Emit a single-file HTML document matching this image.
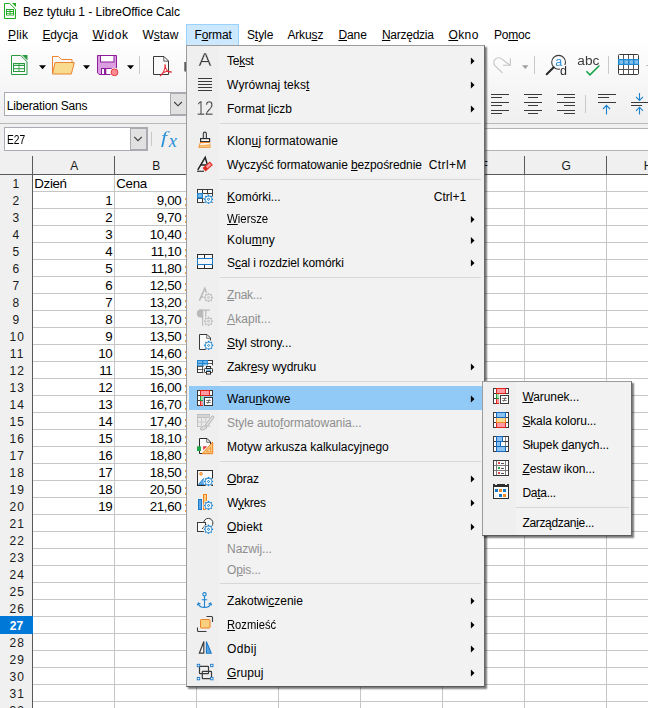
<!DOCTYPE html>
<html lang="pl"><head><meta charset="utf-8"><title>Bez tytułu 1 - LibreOffice Calc</title>
<style>
html,body{margin:0;padding:0;}
body{width:648px;height:708px;overflow:hidden;position:relative;background:#fff;font-family:"Liberation Sans",sans-serif;}
.b{position:absolute;}
.t{position:absolute;white-space:pre;font-family:"Liberation Sans",sans-serif;}
.t u{text-decoration:underline;text-decoration-thickness:1px;text-underline-offset:1px;}
svg{position:absolute;left:0;top:0;overflow:visible;}
.cell{font-size:13.33px;}
</style></head><body>

<div class="b" style="left:0px;top:24px;width:648px;height:100px;background:linear-gradient(#fff 0,#fff 14px,#f0f0f0 96px,#f0f0f0 100px);"></div>
<div class="b" style="left:0px;top:123px;width:648px;height:1px;background:#b9b9b9;"></div>
<div class="b" style="left:0px;top:124px;width:648px;height:50px;background:#f0f0f0;"></div>
<span class="t " style="left:22.90px;top:3.54px;font-size:12px;line-height:16px;color:#000;letter-spacing:-0.050px;">Bez tytułu 1 - LibreOffice Calc</span>
<div class="b" style="left:186px;top:24px;width:53px;height:22px;background:#cce8ff;border:1px solid #99d1ff;box-sizing:border-box;"></div>
<span class="t " style="left:7.90px;top:27.14px;font-size:12px;line-height:16px;color:#000;letter-spacing:0.221px;"><u>P</u>lik</span>
<span class="t " style="left:42.40px;top:27.14px;font-size:12px;line-height:16px;color:#000;letter-spacing:-0.104px;"><u>E</u>dycja</span>
<span class="t " style="left:92.40px;top:27.14px;font-size:12px;line-height:16px;color:#000;letter-spacing:0.540px;"><u>W</u>idok</span>
<span class="t " style="left:142.40px;top:27.14px;font-size:12px;line-height:16px;color:#000;letter-spacing:0.000px;">W<u>s</u>taw</span>
<span class="t " style="left:194.40px;top:27.14px;font-size:12px;line-height:16px;color:#000;letter-spacing:-0.101px;">F<u>o</u>rmat</span>
<span class="t " style="left:246.90px;top:27.14px;font-size:12px;line-height:16px;color:#000;letter-spacing:-0.044px;">S<u>t</u>yle</span>
<span class="t " style="left:287.40px;top:27.14px;font-size:12px;line-height:16px;color:#000;letter-spacing:-0.135px;">Arku<u>s</u>z</span>
<span class="t " style="left:338.40px;top:27.14px;font-size:12px;line-height:16px;color:#000;letter-spacing:-0.062px;"><u>D</u>ane</span>
<span class="t " style="left:381.90px;top:27.14px;font-size:12px;line-height:16px;color:#000;letter-spacing:-0.253px;"><u>N</u>arzędzia</span>
<span class="t " style="left:448.40px;top:27.14px;font-size:12px;line-height:16px;color:#000;letter-spacing:0.439px;"><u>O</u>kno</span>
<span class="t " style="left:493.90px;top:27.14px;font-size:12px;line-height:16px;color:#000;letter-spacing:-0.212px;">Po<u>m</u>oc</span>
<div class="b" style="left:4px;top:92px;width:190px;height:24px;background:#fff;border:1px solid #a9adb3;box-sizing:border-box;"></div>
<div class="b" style="left:170px;top:92px;width:24px;height:24px;background:#e1e1e1;border:2px solid #a9abb0;border-left-width:1px;box-sizing:border-box;"></div>
<span class="t " style="left:6.80px;top:97.54px;font-size:12px;line-height:16px;color:#000;letter-spacing:-0.185px;">Liberation Sans</span>
<div class="b" style="left:4px;top:127px;width:144px;height:24px;background:#fff;border:1px solid #a9adb3;box-sizing:border-box;"></div>
<div class="b" style="left:130px;top:127px;width:18px;height:24px;background:#e1e1e1;border:2px solid #a9abb0;border-left-width:1px;box-sizing:border-box;"></div>
<span class="t " style="left:7.10px;top:132.24px;font-size:12px;line-height:16px;color:#000;transform:scaleX(0.8524);transform-origin:0 0;">E27</span>
<div class="b" style="left:151px;top:132px;width:1px;height:14px;background:#c8c8c8;"></div>
<div class="b" style="left:186px;top:128px;width:470px;height:23px;background:#fff;border:1px solid #b4b4b4;box-sizing:border-box;"></div>
<span class="t" style="left:161.2px;top:126.06px;font-family:'Liberation Serif',serif;font-style:italic;font-size:17px;line-height:24px;color:#2a8fd6;transform:scaleX(1.3);transform-origin:0 0;">f</span>
<span class="t" style="left:168.7px;top:128.72px;font-family:'Liberation Serif',serif;font-style:italic;font-size:18.3px;line-height:24px;color:#2a8fd6;">x</span>
<div class="b" style="left:0px;top:151px;width:648px;height:23px;background:#f0f0f0;"></div>
<div class="b" style="left:0px;top:174px;width:648px;height:1px;background:#5a5a5a;"></div>
<div class="b" style="left:33px;top:175px;width:615px;height:533px;background:#fff;"></div>
<div class="b" style="left:0px;top:175px;width:32px;height:533px;background:#f0f0f0;"></div>
<div class="b" style="left:32px;top:156px;width:1px;height:552px;background:#5a5a5a;"></div>
<div class="b" style="left:114px;top:156px;width:1px;height:18px;background:#5a5a5a;"></div>
<div class="b" style="left:114px;top:175px;width:1px;height:533px;background:#c6c6c6;"></div>
<div class="b" style="left:196px;top:156px;width:1px;height:18px;background:#5a5a5a;"></div>
<div class="b" style="left:196px;top:175px;width:1px;height:533px;background:#c6c6c6;"></div>
<div class="b" style="left:278px;top:156px;width:1px;height:18px;background:#5a5a5a;"></div>
<div class="b" style="left:278px;top:175px;width:1px;height:533px;background:#c6c6c6;"></div>
<div class="b" style="left:360px;top:156px;width:1px;height:18px;background:#5a5a5a;"></div>
<div class="b" style="left:360px;top:175px;width:1px;height:533px;background:#c6c6c6;"></div>
<div class="b" style="left:442px;top:156px;width:1px;height:18px;background:#5a5a5a;"></div>
<div class="b" style="left:442px;top:175px;width:1px;height:533px;background:#c6c6c6;"></div>
<div class="b" style="left:524px;top:156px;width:1px;height:18px;background:#5a5a5a;"></div>
<div class="b" style="left:524px;top:175px;width:1px;height:533px;background:#c6c6c6;"></div>
<div class="b" style="left:606px;top:156px;width:1px;height:18px;background:#5a5a5a;"></div>
<div class="b" style="left:606px;top:175px;width:1px;height:533px;background:#c6c6c6;"></div>
<div class="b" style="left:33px;top:191px;width:615px;height:1px;background:#c6c6c6;"></div>
<div class="b" style="left:33px;top:208px;width:615px;height:1px;background:#c6c6c6;"></div>
<div class="b" style="left:33px;top:225px;width:615px;height:1px;background:#c6c6c6;"></div>
<div class="b" style="left:33px;top:242px;width:615px;height:1px;background:#c6c6c6;"></div>
<div class="b" style="left:33px;top:259px;width:615px;height:1px;background:#c6c6c6;"></div>
<div class="b" style="left:33px;top:276px;width:615px;height:1px;background:#c6c6c6;"></div>
<div class="b" style="left:33px;top:293px;width:615px;height:1px;background:#c6c6c6;"></div>
<div class="b" style="left:33px;top:310px;width:615px;height:1px;background:#c6c6c6;"></div>
<div class="b" style="left:33px;top:327px;width:615px;height:1px;background:#c6c6c6;"></div>
<div class="b" style="left:33px;top:344px;width:615px;height:1px;background:#c6c6c6;"></div>
<div class="b" style="left:33px;top:361px;width:615px;height:1px;background:#c6c6c6;"></div>
<div class="b" style="left:33px;top:378px;width:615px;height:1px;background:#c6c6c6;"></div>
<div class="b" style="left:33px;top:395px;width:615px;height:1px;background:#c6c6c6;"></div>
<div class="b" style="left:33px;top:412px;width:615px;height:1px;background:#c6c6c6;"></div>
<div class="b" style="left:33px;top:429px;width:615px;height:1px;background:#c6c6c6;"></div>
<div class="b" style="left:33px;top:446px;width:615px;height:1px;background:#c6c6c6;"></div>
<div class="b" style="left:33px;top:463px;width:615px;height:1px;background:#c6c6c6;"></div>
<div class="b" style="left:33px;top:480px;width:615px;height:1px;background:#c6c6c6;"></div>
<div class="b" style="left:33px;top:497px;width:615px;height:1px;background:#c6c6c6;"></div>
<div class="b" style="left:33px;top:514px;width:615px;height:1px;background:#c6c6c6;"></div>
<div class="b" style="left:33px;top:531px;width:615px;height:1px;background:#c6c6c6;"></div>
<div class="b" style="left:33px;top:548px;width:615px;height:1px;background:#c6c6c6;"></div>
<div class="b" style="left:33px;top:565px;width:615px;height:1px;background:#c6c6c6;"></div>
<div class="b" style="left:33px;top:582px;width:615px;height:1px;background:#c6c6c6;"></div>
<div class="b" style="left:33px;top:599px;width:615px;height:1px;background:#c6c6c6;"></div>
<div class="b" style="left:33px;top:616px;width:615px;height:1px;background:#c6c6c6;"></div>
<div class="b" style="left:33px;top:633px;width:615px;height:1px;background:#c6c6c6;"></div>
<div class="b" style="left:33px;top:650px;width:615px;height:1px;background:#c6c6c6;"></div>
<div class="b" style="left:33px;top:667px;width:615px;height:1px;background:#c6c6c6;"></div>
<div class="b" style="left:33px;top:684px;width:615px;height:1px;background:#c6c6c6;"></div>
<div class="b" style="left:33px;top:701px;width:615px;height:1px;background:#c6c6c6;"></div>
<div class="b" style="left:0px;top:616px;width:33px;height:18px;background:#0078d7;"></div>
<span class="t " style="left:70.20px;top:158.14px;font-size:12px;line-height:16px;color:#1a1a1a;">A</span>
<span class="t " style="left:152.20px;top:158.14px;font-size:12px;line-height:16px;color:#1a1a1a;">B</span>
<span class="t " style="left:233.87px;top:158.14px;font-size:12px;line-height:16px;color:#1a1a1a;">C</span>
<span class="t " style="left:315.87px;top:158.14px;font-size:12px;line-height:16px;color:#1a1a1a;">D</span>
<span class="t " style="left:398.20px;top:158.14px;font-size:12px;line-height:16px;color:#1a1a1a;">E</span>
<span class="t " style="left:480.53px;top:158.14px;font-size:12px;line-height:16px;color:#1a1a1a;">F</span>
<span class="t " style="left:561.53px;top:158.14px;font-size:12px;line-height:16px;color:#1a1a1a;">G</span>
<span class="t " style="left:643.87px;top:158.14px;font-size:12px;line-height:16px;color:#1a1a1a;">H</span>
<span class="t " style="left:12.56px;top:176.04px;font-size:12px;line-height:16px;color:#1a1a1a;letter-spacing:1.500px;">1</span>
<span class="t " style="left:12.56px;top:193.04px;font-size:12px;line-height:16px;color:#1a1a1a;letter-spacing:1.500px;">2</span>
<span class="t " style="left:12.56px;top:210.04px;font-size:12px;line-height:16px;color:#1a1a1a;letter-spacing:1.500px;">3</span>
<span class="t " style="left:12.56px;top:227.04px;font-size:12px;line-height:16px;color:#1a1a1a;letter-spacing:1.500px;">4</span>
<span class="t " style="left:12.56px;top:244.04px;font-size:12px;line-height:16px;color:#1a1a1a;letter-spacing:1.500px;">5</span>
<span class="t " style="left:12.56px;top:261.04px;font-size:12px;line-height:16px;color:#1a1a1a;letter-spacing:1.500px;">6</span>
<span class="t " style="left:12.56px;top:278.04px;font-size:12px;line-height:16px;color:#1a1a1a;letter-spacing:1.500px;">7</span>
<span class="t " style="left:12.56px;top:295.04px;font-size:12px;line-height:16px;color:#1a1a1a;letter-spacing:1.500px;">8</span>
<span class="t " style="left:12.56px;top:312.04px;font-size:12px;line-height:16px;color:#1a1a1a;letter-spacing:1.500px;">9</span>
<span class="t " style="left:9.38px;top:329.04px;font-size:12px;line-height:16px;color:#1a1a1a;letter-spacing:1.200px;">10</span>
<span class="t " style="left:9.82px;top:346.04px;font-size:12px;line-height:16px;color:#1a1a1a;letter-spacing:1.200px;">11</span>
<span class="t " style="left:9.38px;top:363.04px;font-size:12px;line-height:16px;color:#1a1a1a;letter-spacing:1.200px;">12</span>
<span class="t " style="left:9.38px;top:380.04px;font-size:12px;line-height:16px;color:#1a1a1a;letter-spacing:1.200px;">13</span>
<span class="t " style="left:9.38px;top:397.04px;font-size:12px;line-height:16px;color:#1a1a1a;letter-spacing:1.200px;">14</span>
<span class="t " style="left:9.38px;top:414.04px;font-size:12px;line-height:16px;color:#1a1a1a;letter-spacing:1.200px;">15</span>
<span class="t " style="left:9.38px;top:431.04px;font-size:12px;line-height:16px;color:#1a1a1a;letter-spacing:1.200px;">16</span>
<span class="t " style="left:9.38px;top:448.04px;font-size:12px;line-height:16px;color:#1a1a1a;letter-spacing:1.200px;">17</span>
<span class="t " style="left:9.38px;top:465.04px;font-size:12px;line-height:16px;color:#1a1a1a;letter-spacing:1.200px;">18</span>
<span class="t " style="left:9.38px;top:482.04px;font-size:12px;line-height:16px;color:#1a1a1a;letter-spacing:1.200px;">19</span>
<span class="t " style="left:9.38px;top:499.04px;font-size:12px;line-height:16px;color:#1a1a1a;letter-spacing:1.200px;">20</span>
<span class="t " style="left:9.38px;top:516.04px;font-size:12px;line-height:16px;color:#1a1a1a;letter-spacing:1.200px;">21</span>
<span class="t " style="left:9.38px;top:533.04px;font-size:12px;line-height:16px;color:#1a1a1a;letter-spacing:1.200px;">22</span>
<span class="t " style="left:9.38px;top:550.04px;font-size:12px;line-height:16px;color:#1a1a1a;letter-spacing:1.200px;">23</span>
<span class="t " style="left:9.38px;top:567.04px;font-size:12px;line-height:16px;color:#1a1a1a;letter-spacing:1.200px;">24</span>
<span class="t " style="left:9.38px;top:584.04px;font-size:12px;line-height:16px;color:#1a1a1a;letter-spacing:1.200px;">25</span>
<span class="t " style="left:9.38px;top:601.04px;font-size:12px;line-height:16px;color:#1a1a1a;letter-spacing:1.200px;">26</span>
<span class="t " style="left:9.83px;top:618.04px;font-size:12px;line-height:16px;color:#fff;font-weight:bold;">27</span>
<span class="t " style="left:9.38px;top:635.04px;font-size:12px;line-height:16px;color:#1a1a1a;letter-spacing:1.200px;">28</span>
<span class="t " style="left:9.38px;top:652.04px;font-size:12px;line-height:16px;color:#1a1a1a;letter-spacing:1.200px;">29</span>
<span class="t " style="left:9.38px;top:669.04px;font-size:12px;line-height:16px;color:#1a1a1a;letter-spacing:1.200px;">30</span>
<span class="t " style="left:9.38px;top:686.04px;font-size:12px;line-height:16px;color:#1a1a1a;letter-spacing:1.200px;">31</span>
<span class="t " style="left:9.38px;top:703.04px;font-size:12px;line-height:16px;color:#1a1a1a;letter-spacing:1.200px;">32</span>
<span class="t" style="left:34.30px;top:174.88px;font-size:13.33px;line-height:17px;letter-spacing:-0.35px;color:#000;">Dzień</span>
<span class="t" style="left:116.30px;top:174.88px;font-size:13.33px;line-height:17px;letter-spacing:-0.35px;color:#000;">Cena</span>
<span class="t" style="left:105.25px;top:191.88px;font-size:13.33px;line-height:17px;letter-spacing:-0.35px;color:#000;">1</span>
<span class="t" style="left:156.79px;top:191.88px;font-size:13.33px;line-height:17px;letter-spacing:-0.35px;color:#000;">9,00</span>
<div class="b" style="left:185px;top:198px;width:1px;height:2px;background:#f0a040;"></div>
<div class="b" style="left:185px;top:204px;width:1px;height:2px;background:#f0a040;"></div>
<span class="t" style="left:105.25px;top:208.88px;font-size:13.33px;line-height:17px;letter-spacing:-0.35px;color:#000;">2</span>
<span class="t" style="left:156.79px;top:208.88px;font-size:13.33px;line-height:17px;letter-spacing:-0.35px;color:#000;">9,70</span>
<div class="b" style="left:185px;top:215px;width:1px;height:2px;background:#f0a040;"></div>
<div class="b" style="left:185px;top:221px;width:1px;height:2px;background:#f0a040;"></div>
<span class="t" style="left:105.25px;top:225.88px;font-size:13.33px;line-height:17px;letter-spacing:-0.35px;color:#000;">3</span>
<span class="t" style="left:149.74px;top:225.88px;font-size:13.33px;line-height:17px;letter-spacing:-0.35px;color:#000;">10,40</span>
<div class="b" style="left:185px;top:232px;width:1px;height:2px;background:#f0a040;"></div>
<div class="b" style="left:185px;top:238px;width:1px;height:2px;background:#f0a040;"></div>
<span class="t" style="left:105.25px;top:242.88px;font-size:13.33px;line-height:17px;letter-spacing:-0.35px;color:#000;">4</span>
<span class="t" style="left:150.73px;top:242.88px;font-size:13.33px;line-height:17px;letter-spacing:-0.35px;color:#000;">11,10</span>
<div class="b" style="left:185px;top:249px;width:1px;height:2px;background:#f0a040;"></div>
<div class="b" style="left:185px;top:255px;width:1px;height:2px;background:#f0a040;"></div>
<span class="t" style="left:105.25px;top:259.88px;font-size:13.33px;line-height:17px;letter-spacing:-0.35px;color:#000;">5</span>
<span class="t" style="left:150.73px;top:259.88px;font-size:13.33px;line-height:17px;letter-spacing:-0.35px;color:#000;">11,80</span>
<div class="b" style="left:185px;top:266px;width:1px;height:2px;background:#f0a040;"></div>
<div class="b" style="left:185px;top:272px;width:1px;height:2px;background:#f0a040;"></div>
<span class="t" style="left:105.25px;top:276.88px;font-size:13.33px;line-height:17px;letter-spacing:-0.35px;color:#000;">6</span>
<span class="t" style="left:149.74px;top:276.88px;font-size:13.33px;line-height:17px;letter-spacing:-0.35px;color:#000;">12,50</span>
<div class="b" style="left:185px;top:283px;width:1px;height:2px;background:#f0a040;"></div>
<div class="b" style="left:185px;top:289px;width:1px;height:2px;background:#f0a040;"></div>
<span class="t" style="left:105.25px;top:293.88px;font-size:13.33px;line-height:17px;letter-spacing:-0.35px;color:#000;">7</span>
<span class="t" style="left:149.74px;top:293.88px;font-size:13.33px;line-height:17px;letter-spacing:-0.35px;color:#000;">13,20</span>
<div class="b" style="left:185px;top:300px;width:1px;height:2px;background:#f0a040;"></div>
<div class="b" style="left:185px;top:306px;width:1px;height:2px;background:#f0a040;"></div>
<span class="t" style="left:105.25px;top:310.88px;font-size:13.33px;line-height:17px;letter-spacing:-0.35px;color:#000;">8</span>
<span class="t" style="left:149.74px;top:310.88px;font-size:13.33px;line-height:17px;letter-spacing:-0.35px;color:#000;">13,70</span>
<div class="b" style="left:185px;top:317px;width:1px;height:2px;background:#f0a040;"></div>
<div class="b" style="left:185px;top:323px;width:1px;height:2px;background:#f0a040;"></div>
<span class="t" style="left:105.25px;top:327.88px;font-size:13.33px;line-height:17px;letter-spacing:-0.35px;color:#000;">9</span>
<span class="t" style="left:149.74px;top:327.88px;font-size:13.33px;line-height:17px;letter-spacing:-0.35px;color:#000;">13,50</span>
<div class="b" style="left:185px;top:334px;width:1px;height:2px;background:#f0a040;"></div>
<div class="b" style="left:185px;top:340px;width:1px;height:2px;background:#f0a040;"></div>
<span class="t" style="left:98.19px;top:344.88px;font-size:13.33px;line-height:17px;letter-spacing:-0.35px;color:#000;">10</span>
<span class="t" style="left:149.74px;top:344.88px;font-size:13.33px;line-height:17px;letter-spacing:-0.35px;color:#000;">14,60</span>
<div class="b" style="left:185px;top:351px;width:1px;height:2px;background:#f0a040;"></div>
<div class="b" style="left:185px;top:357px;width:1px;height:2px;background:#f0a040;"></div>
<span class="t" style="left:99.18px;top:361.88px;font-size:13.33px;line-height:17px;letter-spacing:-0.35px;color:#000;">11</span>
<span class="t" style="left:149.74px;top:361.88px;font-size:13.33px;line-height:17px;letter-spacing:-0.35px;color:#000;">15,30</span>
<div class="b" style="left:185px;top:368px;width:1px;height:2px;background:#f0a040;"></div>
<div class="b" style="left:185px;top:374px;width:1px;height:2px;background:#f0a040;"></div>
<span class="t" style="left:98.19px;top:378.88px;font-size:13.33px;line-height:17px;letter-spacing:-0.35px;color:#000;">12</span>
<span class="t" style="left:149.74px;top:378.88px;font-size:13.33px;line-height:17px;letter-spacing:-0.35px;color:#000;">16,00</span>
<div class="b" style="left:185px;top:385px;width:1px;height:2px;background:#f0a040;"></div>
<div class="b" style="left:185px;top:391px;width:1px;height:2px;background:#f0a040;"></div>
<span class="t" style="left:98.19px;top:395.88px;font-size:13.33px;line-height:17px;letter-spacing:-0.35px;color:#000;">13</span>
<span class="t" style="left:149.74px;top:395.88px;font-size:13.33px;line-height:17px;letter-spacing:-0.35px;color:#000;">16,70</span>
<div class="b" style="left:185px;top:402px;width:1px;height:2px;background:#f0a040;"></div>
<div class="b" style="left:185px;top:408px;width:1px;height:2px;background:#f0a040;"></div>
<span class="t" style="left:98.19px;top:412.88px;font-size:13.33px;line-height:17px;letter-spacing:-0.35px;color:#000;">14</span>
<span class="t" style="left:149.74px;top:412.88px;font-size:13.33px;line-height:17px;letter-spacing:-0.35px;color:#000;">17,40</span>
<div class="b" style="left:185px;top:419px;width:1px;height:2px;background:#f0a040;"></div>
<div class="b" style="left:185px;top:425px;width:1px;height:2px;background:#f0a040;"></div>
<span class="t" style="left:98.19px;top:429.88px;font-size:13.33px;line-height:17px;letter-spacing:-0.35px;color:#000;">15</span>
<span class="t" style="left:149.74px;top:429.88px;font-size:13.33px;line-height:17px;letter-spacing:-0.35px;color:#000;">18,10</span>
<div class="b" style="left:185px;top:436px;width:1px;height:2px;background:#f0a040;"></div>
<div class="b" style="left:185px;top:442px;width:1px;height:2px;background:#f0a040;"></div>
<span class="t" style="left:98.19px;top:446.88px;font-size:13.33px;line-height:17px;letter-spacing:-0.35px;color:#000;">16</span>
<span class="t" style="left:149.74px;top:446.88px;font-size:13.33px;line-height:17px;letter-spacing:-0.35px;color:#000;">18,80</span>
<div class="b" style="left:185px;top:453px;width:1px;height:2px;background:#f0a040;"></div>
<div class="b" style="left:185px;top:459px;width:1px;height:2px;background:#f0a040;"></div>
<span class="t" style="left:98.19px;top:463.88px;font-size:13.33px;line-height:17px;letter-spacing:-0.35px;color:#000;">17</span>
<span class="t" style="left:149.74px;top:463.88px;font-size:13.33px;line-height:17px;letter-spacing:-0.35px;color:#000;">18,50</span>
<div class="b" style="left:185px;top:470px;width:1px;height:2px;background:#f0a040;"></div>
<div class="b" style="left:185px;top:476px;width:1px;height:2px;background:#f0a040;"></div>
<span class="t" style="left:98.19px;top:480.88px;font-size:13.33px;line-height:17px;letter-spacing:-0.35px;color:#000;">18</span>
<span class="t" style="left:149.74px;top:480.88px;font-size:13.33px;line-height:17px;letter-spacing:-0.35px;color:#000;">20,50</span>
<div class="b" style="left:185px;top:487px;width:1px;height:2px;background:#f0a040;"></div>
<div class="b" style="left:185px;top:493px;width:1px;height:2px;background:#f0a040;"></div>
<span class="t" style="left:98.19px;top:497.88px;font-size:13.33px;line-height:17px;letter-spacing:-0.35px;color:#000;">19</span>
<span class="t" style="left:149.74px;top:497.88px;font-size:13.33px;line-height:17px;letter-spacing:-0.35px;color:#000;">21,60</span>
<div class="b" style="left:185px;top:504px;width:1px;height:2px;background:#f0a040;"></div>
<div class="b" style="left:185px;top:510px;width:1px;height:2px;background:#f0a040;"></div>
<svg width="648" height="708" viewBox="0 0 648 708"><defs><filter id="idf" x="-10%" y="-10%" width="120%" height="120%"><feOffset dx="0" dy="0"/></filter></defs>
<!-- title icon -->
<g>
<path d="M4.500 3.500h5.200l5.800 5.800v9.200h-11z" fill="#fff" stroke="#22aa22" stroke-width="1"/>
<path d="M12 3h4v4z" fill="#22aa22"/>
<rect x="6" y="9" width="8" height="6.500" fill="#22aa22"/>
<g fill="#fff"><rect x="7" y="10" width="2.600" height="1"/><rect x="10.400" y="10" width="2.600" height="1"/><rect x="7" y="12" width="2.600" height="1"/><rect x="10.400" y="12" width="2.600" height="1"/><rect x="7" y="13.700" width="2.600" height="1"/><rect x="10.400" y="13.700" width="2.600" height="1"/></g>
</g>
<!-- new spreadsheet -->
<g>
<path d="M11.5 55.5h9.3l6.2 6.2v12.8h-15.5z" fill="#fafafa" stroke="#2a9a42" stroke-width="1"/>
<path d="M22 55h5.5v5.5z" fill="#2a9a42"/>
<rect x="13" y="63" width="12" height="9" fill="#2a9a42"/>
<rect x="14" y="64" width="4.6" height="1" fill="#c8ecc8"/><rect x="19.4" y="64" width="4.6" height="1" fill="#c8ecc8"/>
<rect x="14" y="66" width="4.6" height="2.2" fill="#fff"/><rect x="19.4" y="66" width="4.6" height="2.2" fill="#fff"/>
<rect x="14" y="69.2" width="4.6" height="1.8" fill="#fff"/><rect x="19.4" y="69.2" width="4.6" height="1.8" fill="#fff"/>
</g>
<path d="M39 65.3h7l-3.5 4z" fill="#000"/>
<!-- open folder -->
<g>
<path d="M52.5 74v-17.5h6l3 3h10.5v3.5" fill="#fafafa" stroke="#ee8432" stroke-width="1"/>
<path d="M55 62.5h19.3l-3 11.5h-18.8z" fill="#f8db8f" stroke="#ee8432" stroke-width="1" stroke-linejoin="round"/>
</g>
<path d="M83 65.3h7l-3.5 4z" fill="#000"/>
<!-- save -->
<g>
<path d="M97.5 55.5h19v19h-17.3l-1.7 -1.7z" fill="#dc9ee0" stroke="#8e1f9a" stroke-width="1"/>
<rect x="100.5" y="55.5" width="13.5" height="6.5" fill="#fff" stroke="#8e1f9a"/>
<rect x="101.5" y="68.5" width="12" height="6" fill="#fff" stroke="#8e1f9a"/>
<rect x="104" y="69" width="2.3" height="5" fill="#8e1f9a"/>
<circle cx="114.5" cy="72.3" r="4.6" fill="#fafafa"/>
<circle cx="114.5" cy="72.3" r="3.4" fill="#ff8a96" stroke="#e23a3a" stroke-width="1"/>
</g>
<path d="M127 65.3h7l-3.5 4z" fill="#000"/>
<rect x="139" y="56" width="1" height="18" fill="#c9c9c9"/>
<!-- pdf -->
<g>
<path d="M153.500 56.500h10.5l4.5 4.500v13.500h-15z" fill="#fafafa" stroke="#3a3a3a"/>
<path d="M163.800 56.800v4.400h4.400" fill="none" stroke="#3a3a3a" stroke-width="0.800"/>
<path d="M165 64.200c0.300 3 -0.300 5.300 -1.300 7.300c-1 2 -2.500 3.700 -3.700 4.500M165 64.200c0.200 3 0.800 5 2 6.300c1.300 1.300 3 1.700 4.800 1.700M160 76c1.500 -2.500 4 -4 6 -4.500c2 -0.500 4.200 -0.200 5.800 0.700" fill="none" stroke="#e8303a" stroke-width="1.100"/>
</g>
<!-- print (cut) -->
<rect x="184.3" y="62" width="3" height="9.500" fill="#5a5a5a"/>
<!-- redo disabled -->
<g fill="none" stroke="#c4c4c4" stroke-width="1.100">
<path d="M502.500 73.200l-7.300 -7.300a4.800 4.800 0 0 1 6.800 -6.800l8 6.200"/>
<path d="M510.400 58.300v7h-7.400"/>
</g>
<path d="M522 65.300h6.500l-3.250 3.700z" fill="#a0a0a0"/>
<rect x="534" y="56" width="1" height="18" fill="#c9c9c9"/>
<!-- find & replace -->
<g>
<circle cx="558.600" cy="62.300" r="6.900" fill="#fcfcfc" stroke="#3a3a3a" stroke-width="1.100"/>
<path d="M553.700 67.300l-7 7" stroke="#2a2a2a" stroke-width="2" stroke-linecap="round"/>
<rect x="560" y="65" width="8" height="10" fill="#f6f6f6"/>
<text filter="url(#idf)" x="555.200" y="65.900" font-family="Liberation Sans, sans-serif" font-size="12.500" fill="#2a8fd6">a</text>
<text filter="url(#idf)" x="560" y="74.500" font-family="Liberation Sans, sans-serif" font-size="12.500" fill="#2a2a2a">d</text>
</g>
<!-- spell -->
<g>
<text filter="url(#idf)" x="577.300" y="64.700" font-family="Liberation Sans, sans-serif" font-size="12" fill="#3a3a3a" textLength="22" lengthAdjust="spacingAndGlyphs">abc</text>
<path d="M586.400 71.300l3.600 3.600l9.400 -9.400" fill="none" stroke="#18a34a" stroke-width="1.600"/>
</g>
<rect x="608" y="56" width="1" height="18" fill="#c9c9c9"/>
<!-- grid icon -->
<g>
<rect x="618.500" y="54.500" width="20" height="20" rx="1" fill="#fff" stroke="#3a3a3a"/>
<path d="M623.500 55v19.500M628.500 55v19.500M633.500 55v19.500M619 59.500h19.500M619 64.500h19.500M619 69.500h19.500" stroke="#555" fill="none"/>
<rect x="618" y="59" width="21" height="6" fill="#1e88d2"/>
<rect x="619.500" y="60.300" width="3.500" height="3.500" fill="#86c0ea"/><rect x="624.500" y="60.300" width="3.500" height="3.500" fill="#86c0ea"/><rect x="629.500" y="60.300" width="3.500" height="3.500" fill="#86c0ea"/><rect x="634.500" y="60.300" width="3.500" height="3.500" fill="#86c0ea"/>
</g>
<rect x="646.500" y="65" width="2" height="1" fill="#b0b0b0"/>
<!-- align left/center/right -->
<g fill="#3a3a3a">
<rect x="491" y="94" width="18" height="1"/><rect x="491" y="97" width="11" height="1"/><rect x="491" y="102" width="18" height="1"/><rect x="491" y="105" width="11" height="1"/><rect x="491" y="110" width="18" height="1"/><rect x="491" y="113" width="11" height="1"/>
<rect x="524" y="94" width="18" height="1"/><rect x="528" y="97" width="10" height="1"/><rect x="524" y="102" width="18" height="1"/><rect x="528" y="105" width="10" height="1"/><rect x="524" y="110" width="18" height="1"/><rect x="528" y="113" width="10" height="1"/>
<rect x="557" y="94" width="18" height="1"/><rect x="564" y="97" width="11" height="1"/><rect x="557" y="102" width="18" height="1"/><rect x="564" y="105" width="11" height="1"/><rect x="557" y="110" width="18" height="1"/><rect x="564" y="113" width="11" height="1"/>
</g>
<rect x="585" y="95" width="1" height="18" fill="#c9c9c9"/>
<!-- align top -->
<g fill="#3a3a3a"><rect x="598" y="94" width="18" height="1"/><rect x="598" y="97" width="11" height="1"/><rect x="598" y="102" width="18" height="1"/></g>
<path d="M606.500 114.500v-9M603 109l3.500 -3.600l3.500 3.600" fill="none" stroke="#1c84d0" stroke-width="1.100"/>
<!-- align middle -->
<g fill="#3a3a3a"><rect x="631" y="102" width="18" height="1"/><rect x="631" y="105" width="11" height="1"/></g>
<path d="M639.500 93v7M636 96.800l3.500 3.600l3.500 -3.600M639.500 114.500v-7M636 110.800l3.500 -3.600l3.500 3.600" fill="none" stroke="#1c84d0" stroke-width="1.100"/>
<!-- chevrons -->
<path d="M174.200 102l3.800 3.800l3.800 -3.800" fill="none" stroke="#3a3a3a" stroke-width="1.100"/>
<path d="M134.200 136.900l3.800 3.800l3.800 -3.800" fill="none" stroke="#3a3a3a" stroke-width="1.100"/>
</svg>
<div class="b" style="left:186px;top:45px;width:299px;height:642px;background:#f2f2f2;border:1px solid;border-color:#9c9c9c #6a6a6a #5a5a5a #9c9c9c;box-sizing:border-box;box-shadow:2px 2px 1.5px rgba(0,0,0,0.5);"></div>
<div class="b" style="left:187px;top:46px;width:32px;height:640px;background:#efefef;"></div>
<div class="b" style="left:189px;top:386px;width:293px;height:24px;background:#91c9f7;"></div>
<span class="t " style="left:227.10px;top:52.84px;font-size:12px;line-height:16px;color:#000;letter-spacing:-0.302px;">Te<u>k</u>st</span>
<span class="t " style="left:227.10px;top:76.84px;font-size:12px;line-height:16px;color:#000;letter-spacing:0.073px;">Wyrównaj teks<u>t</u></span>
<span class="t " style="left:227.10px;top:100.84px;font-size:12px;line-height:16px;color:#000;letter-spacing:-0.049px;">Format <u>l</u>iczb</span>
<div class="b" style="left:220px;top:123px;width:261px;height:1px;background:#d7d7d7;"></div>
<span class="t " style="left:227.10px;top:132.84px;font-size:12px;line-height:16px;color:#000;letter-spacing:0.115px;">Klon<u>u</u>j formatowanie</span>
<span class="t " style="left:227.10px;top:156.84px;font-size:12px;line-height:16px;color:#000;letter-spacing:-0.099px;">Wyczyść formatowanie <u>b</u>ezpośrednie</span>
<span class="t " style="left:428.80px;top:156.84px;font-size:12px;line-height:16px;color:#000;letter-spacing:0.367px;">Ctrl+M</span>
<div class="b" style="left:220px;top:179px;width:261px;height:1px;background:#d7d7d7;"></div>
<span class="t " style="left:227.10px;top:188.84px;font-size:12px;line-height:16px;color:#000;letter-spacing:-0.046px;"><u>K</u>omórki...</span>
<span class="t " style="left:433.70px;top:188.84px;font-size:12px;line-height:16px;color:#000;letter-spacing:0.051px;">Ctrl+1</span>
<span class="t " style="left:227.10px;top:211.34px;font-size:12px;line-height:16px;color:#000;transform:scaleX(0.9507);transform-origin:0 0;"><u>W</u>iersze</span>
<span class="t " style="left:227.10px;top:232.34px;font-size:12px;line-height:16px;color:#000;letter-spacing:0.152px;">Kolu<u>m</u>ny</span>
<span class="t " style="left:227.10px;top:254.84px;font-size:12px;line-height:16px;color:#000;letter-spacing:-0.117px;">S<u>c</u>al i rozdziel komórki</span>
<div class="b" style="left:220px;top:277px;width:261px;height:1px;background:#d7d7d7;"></div>
<span class="t " style="left:227.10px;top:286.84px;font-size:12px;line-height:16px;color:#8e8e8e;letter-spacing:-0.230px;"><u>Z</u>nak...</span>
<span class="t " style="left:227.10px;top:310.84px;font-size:12px;line-height:16px;color:#8e8e8e;letter-spacing:0.043px;"><u>A</u>kapit...</span>
<span class="t " style="left:227.10px;top:334.84px;font-size:12px;line-height:16px;color:#000;letter-spacing:-0.056px;"><u>S</u>tyl strony...</span>
<span class="t " style="left:227.10px;top:358.84px;font-size:12px;line-height:16px;color:#000;letter-spacing:-0.114px;">Zakr<u>e</u>sy wydruku</span>
<div class="b" style="left:220px;top:381px;width:261px;height:1px;background:#d7d7d7;"></div>
<span class="t " style="left:227.10px;top:390.84px;font-size:12px;line-height:16px;color:#000;letter-spacing:0.061px;">Waru<u>n</u>kowe</span>
<span class="t " style="left:227.10px;top:414.84px;font-size:12px;line-height:16px;color:#8e8e8e;letter-spacing:-0.038px;">Style auto<u>f</u>ormatowania...</span>
<span class="t " style="left:227.10px;top:438.84px;font-size:12px;line-height:16px;color:#000;letter-spacing:-0.014px;">Motyw arkusza kalkulacyjnego</span>
<div class="b" style="left:220px;top:461px;width:261px;height:1px;background:#d7d7d7;"></div>
<span class="t " style="left:227.10px;top:470.84px;font-size:12px;line-height:16px;color:#000;letter-spacing:-0.219px;"><u>O</u>braz</span>
<span class="t " style="left:227.10px;top:494.84px;font-size:12px;line-height:16px;color:#000;letter-spacing:-0.218px;">W<u>y</u>kres</span>
<span class="t " style="left:227.10px;top:518.84px;font-size:12px;line-height:16px;color:#000;letter-spacing:0.124px;"><u>O</u>biekt</span>
<span class="t " style="left:227.10px;top:541.34px;font-size:12px;line-height:16px;color:#8e8e8e;letter-spacing:-0.080px;">Nazwi<u>j</u>...</span>
<span class="t " style="left:227.10px;top:562.34px;font-size:12px;line-height:16px;color:#8e8e8e;letter-spacing:-0.146px;">O<u>p</u>is...</span>
<div class="b" style="left:220px;top:583px;width:261px;height:1px;background:#d7d7d7;"></div>
<span class="t " style="left:227.10px;top:592.84px;font-size:12px;line-height:16px;color:#000;letter-spacing:-0.019px;">Zakotwi<u>c</u>zenie</span>
<span class="t " style="left:227.10px;top:616.84px;font-size:12px;line-height:16px;color:#000;transform:scaleX(0.9321);transform-origin:0 0;"><u>R</u>ozmieść</span>
<span class="t " style="left:227.10px;top:640.84px;font-size:12px;line-height:16px;color:#000;letter-spacing:0.347px;">Odbi<u>j</u></span>
<span class="t " style="left:227.10px;top:664.84px;font-size:12px;line-height:16px;color:#000;letter-spacing:0.056px;"><u>G</u>rupuj</span>
<div class="b" style="left:482px;top:381px;width:150px;height:155px;background:#f2f2f2;border:1px solid;border-color:#9c9c9c #6a6a6a #5a5a5a #9c9c9c;box-sizing:border-box;box-shadow:2px 2px 1.5px rgba(0,0,0,0.5);"></div>
<div class="b" style="left:483px;top:382px;width:33px;height:153px;background:#efefef;"></div>
<span class="t " style="left:522.40px;top:388.84px;font-size:12px;line-height:16px;color:#000;letter-spacing:-0.064px;"><u>W</u>arunek...</span>
<span class="t " style="left:522.40px;top:412.84px;font-size:12px;line-height:16px;color:#000;letter-spacing:-0.146px;"><u>S</u>kala koloru...</span>
<span class="t " style="left:522.40px;top:436.84px;font-size:12px;line-height:16px;color:#000;letter-spacing:-0.135px;">Słupek <u>d</u>anych...</span>
<span class="t " style="left:522.40px;top:460.84px;font-size:12px;line-height:16px;color:#000;letter-spacing:-0.102px;"><u>Z</u>estaw ikon...</span>
<span class="t " style="left:522.40px;top:484.84px;font-size:12px;line-height:16px;color:#000;letter-spacing:-0.275px;">Da<u>t</u>a...</span>
<div class="b" style="left:516px;top:507px;width:113px;height:1px;background:#d7d7d7;"></div>
<span class="t " style="left:522.40px;top:514.54px;font-size:12px;line-height:16px;color:#000;letter-spacing:-0.318px;">Zarządzan<u>i</u>e...</span>
<svg width="648" height="708" viewBox="0 0 648 708"><path d="M470.9 57.6l3.600 3.500l-3.600 3.500z" fill="#000"/><path d="M470.9 81.6l3.600 3.500l-3.600 3.500z" fill="#000"/><path d="M470.9 105.6l3.600 3.500l-3.600 3.500z" fill="#000"/><path d="M470.9 216.1l3.600 3.500l-3.600 3.500z" fill="#000"/><path d="M470.9 237.1l3.600 3.500l-3.600 3.500z" fill="#000"/><path d="M470.9 259.6l3.600 3.500l-3.600 3.500z" fill="#000"/><path d="M470.9 363.6l3.600 3.500l-3.600 3.500z" fill="#000"/><path d="M470.9 395.6l3.600 3.500l-3.600 3.500z" fill="#000"/><path d="M470.9 475.6l3.600 3.500l-3.600 3.500z" fill="#000"/><path d="M470.9 499.6l3.600 3.500l-3.600 3.500z" fill="#000"/><path d="M470.9 523.6l3.600 3.500l-3.600 3.500z" fill="#000"/><path d="M470.9 597.6l3.600 3.500l-3.600 3.500z" fill="#000"/><path d="M470.9 621.6l3.600 3.500l-3.600 3.500z" fill="#000"/><path d="M470.9 645.6l3.600 3.500l-3.600 3.500z" fill="#000"/><path d="M470.9 669.6l3.600 3.500l-3.600 3.500z" fill="#000"/><text filter="url(#idf)" x="198.6" y="66.3" font-family="Liberation Sans, sans-serif" font-size="18.5" fill="#3a3a3a" stroke="#f1f1f1" stroke-width="0.3" textLength="13" lengthAdjust="spacingAndGlyphs">A</text>
<rect x="198" y="78" width="14" height="1" fill="#3a3a3a"/>
<rect x="198" y="81" width="14" height="1" fill="#3a3a3a"/>
<rect x="198" y="84" width="14" height="1" fill="#3a3a3a"/>
<rect x="198" y="87" width="14" height="1" fill="#3a3a3a"/>
<rect x="198" y="90" width="14" height="1" fill="#3a3a3a"/>
<text filter="url(#idf)" x="196.4" y="115" font-family="Liberation Sans, sans-serif" font-size="20" fill="#3a3a3a" stroke="#f1f1f1" stroke-width="0.3" textLength="17" lengthAdjust="spacingAndGlyphs">12</text>
<path d="M203.300 138.400v-4.700a1.550 1.550 0 0 1 3.100 0v4.700" fill="#e4e4e4" stroke="#3a3a3a" stroke-width="1.100"/>
<rect x="200.600" y="138.600" width="9" height="3" fill="#fff" stroke="#2e2e2e" stroke-width="1.200"/>
<path d="M200.100 142h10l0.500 5.800h-12.300z" fill="#f08a28"/>
<path d="M200.500 143.300l9.200 -0.300l0.100 1.500l-9.600 0.400z" fill="#fff"/><path d="M199.900 145.400h10.300l0.100 1.400h-10.700z" fill="#f8dc90"/>
<path d="M197.800 169.800l7.400 -12.400l2.200 7.500M201.300 165h5" fill="none" stroke="#222" stroke-width="1.500"/>
<rect x="197" y="170.700" width="7" height="1.100" fill="#222"/>
<g transform="translate(207.700 166.500) rotate(-41.700)"><rect x="-4.900" y="-2.300" width="9.800" height="4.600" fill="#dd2a1e"/><rect x="-1.300" y="-1.300" width="5" height="2.600" fill="#ff9aa0"/></g>
<rect x="197.5" y="189.5" width="15" height="13" fill="#fafafa" stroke="#3a3a3a"/><path d="M202.5 189.5v13M207.5 189.5v13M197.5 193.5h15M197.5 198.5h15" stroke="#3a3a3a" fill="none"/><rect x="197" y="193" width="6" height="5.500" fill="#1c84d0"/><rect x="198.2" y="194.2" width="3.600" height="3" fill="#7fbdea"/>
<circle cx="208.5" cy="199.3" r="5.1" fill="#f1f1f1"/><path d="M209.32 202.70L209.10 203.76L207.90 203.76L207.68 202.70L206.67 202.28L205.77 202.88L204.92 202.03L205.52 201.13L205.10 200.12L204.04 199.90L204.04 198.70L205.10 198.48L205.52 197.47L204.92 196.57L205.77 195.72L206.67 196.32L207.68 195.90L207.90 194.84L209.10 194.84L209.32 195.90L210.33 196.32L211.23 195.72L212.08 196.57L211.48 197.47L211.90 198.48L212.96 198.70L212.96 199.90L211.90 200.12L211.48 201.13L212.08 202.03L211.23 202.88L210.33 202.28z" fill="#1c84d0" stroke="#1c84d0" stroke-width="0.2" stroke-linejoin="round"/><circle cx="208.5" cy="199.3" r="2.850" fill="#fcfcfc"/><path d="M206.8 199.3l1.700 -1.700l1.700 1.700l-1.700 1.700z" fill="#1c84d0"/><path d="M207.7 199.3l0.800 -0.800l0.800 0.800l-0.800 0.800z" fill="#fcfcfc"/>
<rect x="197.500" y="254.500" width="15" height="14" fill="#fafafa" stroke="#2a2a2a"/><path d="M204.500 254.500v14" stroke="#2a2a2a"/>
<rect x="197.500" y="258.500" width="15" height="6" fill="#f4f8fc" stroke="#1e78c8"/>
<path d="M199.400 300.600l5.400 -12.400l2.600 7M201.500 296.900h4" fill="none" stroke="#b9b9b9" stroke-width="1.500"/>
<circle cx="208.5" cy="297.6" r="5.1" fill="#f1f1f1"/><path d="M209.32 301.00L209.10 302.06L207.90 302.06L207.68 301.00L206.67 300.58L205.77 301.18L204.92 300.33L205.52 299.43L205.10 298.42L204.04 298.20L204.04 297.00L205.10 296.78L205.52 295.77L204.92 294.87L205.77 294.02L206.67 294.62L207.68 294.20L207.90 293.14L209.10 293.14L209.32 294.20L210.33 294.62L211.23 294.02L212.08 294.87L211.48 295.77L211.90 296.78L212.96 297.00L212.96 298.20L211.90 298.42L211.48 299.43L212.08 300.33L211.23 301.18L210.33 300.58z" fill="#b9b9b9" stroke="#b9b9b9" stroke-width="0.2" stroke-linejoin="round"/><circle cx="208.5" cy="297.6" r="2.850" fill="#eeeeee"/><path d="M206.8 297.6l1.700 -1.700l1.700 1.700l-1.700 1.700z" fill="#b9b9b9"/><path d="M207.7 297.6l0.800 -0.800l0.800 0.800l-0.800 0.800z" fill="#eeeeee"/>
<path d="M202.500 309.600h-1.800a3.900 3.900 0 0 0 0 7.800h1.800z" fill="#b9b9b9"/><path d="M199 310.200h11M202.700 310.200v15.600M205.800 310.200v15.600" stroke="#b9b9b9" fill="none" stroke-width="1.200"/>
<circle cx="208.5" cy="321.3" r="5.1" fill="#f1f1f1"/><path d="M209.32 324.70L209.10 325.76L207.90 325.76L207.68 324.70L206.67 324.28L205.77 324.88L204.92 324.03L205.52 323.13L205.10 322.12L204.04 321.90L204.04 320.70L205.10 320.48L205.52 319.47L204.92 318.57L205.77 317.72L206.67 318.32L207.68 317.90L207.90 316.84L209.10 316.84L209.32 317.90L210.33 318.32L211.23 317.72L212.08 318.57L211.48 319.47L211.90 320.48L212.96 320.70L212.96 321.90L211.90 322.12L211.48 323.13L212.08 324.03L211.23 324.88L210.33 324.28z" fill="#b9b9b9" stroke="#b9b9b9" stroke-width="0.2" stroke-linejoin="round"/><circle cx="208.5" cy="321.3" r="2.850" fill="#eeeeee"/><path d="M206.8 321.3l1.700 -1.700l1.700 1.700l-1.700 1.700z" fill="#b9b9b9"/><path d="M207.7 321.3l0.800 -0.800l0.800 0.800l-0.800 0.800z" fill="#eeeeee"/>
<path d="M199.500 334.500h7.500l3.500 3.500v11.500h-11z" fill="#fafafa" stroke="#3a3a3a"/><path d="M206.700 334.800v3.500h3.500" fill="none" stroke="#3a3a3a" stroke-width="0.700"/>
<circle cx="208.7" cy="345.4" r="5.1" fill="#f1f1f1"/><path d="M209.52 348.80L209.30 349.86L208.10 349.86L207.88 348.80L206.87 348.38L205.97 348.98L205.12 348.13L205.72 347.23L205.30 346.22L204.24 346.00L204.24 344.80L205.30 344.58L205.72 343.57L205.12 342.67L205.97 341.82L206.87 342.42L207.88 342.00L208.10 340.94L209.30 340.94L209.52 342.00L210.53 342.42L211.43 341.82L212.28 342.67L211.68 343.57L212.10 344.58L213.16 344.80L213.16 346.00L212.10 346.22L211.68 347.23L212.28 348.13L211.43 348.98L210.53 348.38z" fill="#1c84d0" stroke="#1c84d0" stroke-width="0.2" stroke-linejoin="round"/><circle cx="208.7" cy="345.4" r="2.850" fill="#fcfcfc"/><path d="M207 345.4l1.700 -1.700l1.700 1.700l-1.700 1.700z" fill="#1c84d0"/><path d="M207.9 345.4l0.800 -0.800l0.800 0.800l-0.800 0.800z" fill="#fcfcfc"/>
<rect x="197.500" y="360.500" width="15" height="12" fill="#fafafa" stroke="#3a3a3a"/>
<path d="M202.500 360.500v12M207.500 360.500v12M197.500 363.500h15M197.500 366.500h15M197.500 369.500h15" stroke="#3a3a3a" fill="none" stroke-width="0.800"/>
<rect x="197" y="360" width="11" height="6" fill="#1c84d0"/><rect x="198" y="361.200" width="4" height="1.600" fill="#8cc4ee"/><rect x="203.300" y="361.200" width="4" height="1.600" fill="#8cc4ee"/><rect x="198" y="364" width="4" height="1.400" fill="#8cc4ee"/><rect x="203.300" y="364" width="4" height="1.400" fill="#8cc4ee"/>
<rect x="203.500" y="365.300" width="10" height="9.700" fill="#f1f1f1"/><rect x="206.500" y="366.500" width="4" height="2.500" fill="#fcfcfc" stroke="#2a2a2a"/><rect x="204.500" y="368.500" width="8" height="4" rx="0.800" fill="#fcfcfc" stroke="#2a2a2a"/><rect x="206" y="369.600" width="5" height="1" fill="#1c84d0"/><rect x="206.500" y="371.500" width="4" height="2.600" fill="#fcfcfc" stroke="#2a2a2a"/>
<rect x="197" y="390" width="4" height="16" fill="#3a3a3a"/><rect x="198" y="391" width="2" height="4" fill="#fcfcfc"/><rect x="198" y="396" width="2" height="4" fill="#fcfcfc"/><rect x="198" y="401" width="2" height="4" fill="#fcfcfc"/><rect x="209" y="390" width="4" height="6" fill="#3a3a3a"/><rect x="210" y="391" width="2" height="4" fill="#fcfcfc"/><rect x="200" y="390" width="10" height="6" fill="#e0241a"/><rect x="201" y="391" width="8" height="4" fill="#ff9aa2"/><rect x="200" y="396" width="3" height="5" fill="#1f9a3c"/><rect x="201" y="396" width="2" height="4" fill="#a6e0ae"/><rect x="200" y="401" width="3" height="5" fill="#e0241a"/><rect x="201" y="401" width="2" height="4" fill="#ff9aa2"/><rect x="204" y="397" width="9" height="9" fill="#3a3a3a"/><rect x="205" y="398" width="7" height="7" fill="#fcfcfc"/><path d="M206.3 400.5h4.4M206.3 402.5h4.4M209.4 399.3l-1.800 4.400" stroke="#555" stroke-width="0.800" fill="none"/>
<rect x="197.500" y="414.500" width="12" height="12" fill="#eaeaea" stroke="#c0c0c0"/><rect x="197.500" y="414.500" width="12" height="3" fill="#d4d4d4" stroke="#c0c0c0"/><path d="M201.500 417.500v9M205.700 417.500v9M197.500 422h12" stroke="#cacaca" fill="none"/>
<path d="M212.600 417.200l-6.200 8.400" stroke="#f1f1f1" stroke-width="4.600" stroke-linecap="round"/><ellipse cx="203.600" cy="427.900" rx="4" ry="2.300" transform="rotate(-25 203.600 427.900)" fill="#f1f1f1"/>
<path d="M212.600 417.200l-6.200 8.400" stroke="#b6b6b6" stroke-width="3.400" stroke-linecap="round"/><path d="M212.600 417.200l-6.200 8.400" stroke="#dedede" stroke-width="1.700" stroke-linecap="round"/>
<ellipse cx="203.600" cy="427.900" rx="3.300" ry="1.600" transform="rotate(-25 203.600 427.900)" fill="#dedede" stroke="#b6b6b6" stroke-width="0.900"/>
<path d="M199.500 438.500h7.500l3.500 3.500v11.500h-11z" fill="#fafafa" stroke="#2a2a2a"/><path d="M206.700 438.800v3.500h3.500" fill="none" stroke="#2a2a2a" stroke-width="0.700"/>
<rect x="197" y="446.300" width="4" height="4.700" fill="#1fa84a"/>
<path d="M203.200 446.300h4l-4 4z" fill="#e8303a"/>
<path d="M212.700 442v11.700h-10.500z" fill="#f8c878" stroke="#f08020" stroke-linejoin="round"/><path d="M210.500 447.500v4.200h-3.800z" fill="#fbe3b8" stroke="#f08020" stroke-width="0.700"/>
<rect x="197.500" y="470.500" width="15" height="15" fill="#fafafa" stroke="#2a2a2a"/>
<circle cx="201" cy="473.800" r="1.400" fill="#f8c070" stroke="#f08020" stroke-width="0.800"/>
<path d="M198.500 484.500l5 -6l2.500 3v3z" fill="#5aa5e8" stroke="#1c78c8" stroke-width="0.800"/>
<circle cx="208.5" cy="481.5" r="5.1" fill="#f1f1f1"/><path d="M209.32 484.90L209.10 485.96L207.90 485.96L207.68 484.90L206.67 484.48L205.77 485.08L204.92 484.23L205.52 483.33L205.10 482.32L204.04 482.10L204.04 480.90L205.10 480.68L205.52 479.67L204.92 478.77L205.77 477.92L206.67 478.52L207.68 478.10L207.90 477.04L209.10 477.04L209.32 478.10L210.33 478.52L211.23 477.92L212.08 478.77L211.48 479.67L211.90 480.68L212.96 480.90L212.96 482.10L211.90 482.32L211.48 483.33L212.08 484.23L211.23 485.08L210.33 484.48z" fill="#1c84d0" stroke="#1c84d0" stroke-width="0.2" stroke-linejoin="round"/><circle cx="208.5" cy="481.5" r="2.850" fill="#fcfcfc"/><path d="M206.8 481.5l1.700 -1.700l1.700 1.700l-1.700 1.700z" fill="#1c84d0"/><path d="M207.7 481.5l0.800 -0.800l0.800 0.800l-0.800 0.800z" fill="#fcfcfc"/>
<rect x="198.500" y="499.500" width="3" height="10" fill="#5aa5e8" stroke="#1c78c8"/>
<rect x="203.500" y="494.500" width="3" height="15" fill="#f8d080" stroke="#f08020"/>
<circle cx="208.5" cy="505.5" r="5.1" fill="#f1f1f1"/><path d="M209.32 508.90L209.10 509.96L207.90 509.96L207.68 508.90L206.67 508.48L205.77 509.08L204.92 508.23L205.52 507.33L205.10 506.32L204.04 506.10L204.04 504.90L205.10 504.68L205.52 503.67L204.92 502.77L205.77 501.92L206.67 502.52L207.68 502.10L207.90 501.04L209.10 501.04L209.32 502.10L210.33 502.52L211.23 501.92L212.08 502.77L211.48 503.67L211.90 504.68L212.96 504.90L212.96 506.10L211.90 506.32L211.48 507.33L212.08 508.23L211.23 509.08L210.33 508.48z" fill="#1c84d0" stroke="#1c84d0" stroke-width="0.2" stroke-linejoin="round"/><circle cx="208.5" cy="505.5" r="2.850" fill="#fcfcfc"/><path d="M206.8 505.5l1.700 -1.700l1.700 1.700l-1.700 1.700z" fill="#1c84d0"/><path d="M207.7 505.5l0.800 -0.800l0.800 0.800l-0.800 0.800z" fill="#fcfcfc"/>
<circle cx="208.300" cy="523" r="4.600" fill="#fafafa" stroke="#3a3a3a"/>
<rect x="197.500" y="522.500" width="8" height="9" fill="#fafafa" stroke="#3a3a3a"/>
<path d="M202 529l4.500 -5" stroke="#3a3a3a" fill="none"/>
<circle cx="208.5" cy="529.3" r="5.1" fill="#f1f1f1"/><path d="M209.32 532.70L209.10 533.76L207.90 533.76L207.68 532.70L206.67 532.28L205.77 532.88L204.92 532.03L205.52 531.13L205.10 530.12L204.04 529.90L204.04 528.70L205.10 528.48L205.52 527.47L204.92 526.57L205.77 525.72L206.67 526.32L207.68 525.90L207.90 524.84L209.10 524.84L209.32 525.90L210.33 526.32L211.23 525.72L212.08 526.57L211.48 527.47L211.90 528.48L212.96 528.70L212.96 529.90L211.90 530.12L211.48 531.13L212.08 532.03L211.23 532.88L210.33 532.28z" fill="#1c84d0" stroke="#1c84d0" stroke-width="0.2" stroke-linejoin="round"/><circle cx="208.5" cy="529.3" r="2.850" fill="#fcfcfc"/><path d="M206.8 529.3l1.700 -1.700l1.700 1.700l-1.700 1.700z" fill="#1c84d0"/><path d="M207.7 529.3l0.800 -0.800l0.800 0.800l-0.800 0.800z" fill="#fcfcfc"/>
<g fill="none" stroke="#1c84d0" stroke-width="1.100"><circle cx="204.500" cy="594.300" r="1.700"/><path d="M204.500 596v11.300M201.800 599.800h5.400M198.300 603.300c0.500 2.600 3 4.100 6.200 4.100c3.200 0 5.700 -1.500 6.200 -4.100M197.300 605.300l1 -2.300l2.200 1M211.700 605.300l-1 -2.300l-2.200 1"/></g>
<path d="M206.500 616.500h5a1 1 0 0 1 1 1v4.500M197.500 627.500v3a1 1 0 0 0 1 1h8" fill="none" stroke="#3a3a3a" stroke-width="1.100"/>
<rect x="200.500" y="619.500" width="9.500" height="8.500" rx="0.800" fill="#f8d080" stroke="#f08020"/>
<path d="M203.800 641.800v11.400h-4.500z" fill="#fafafa" stroke="#3a3a3a" stroke-width="1.200" stroke-linejoin="round"/>
<path d="M206.400 641.800v11.400h4.900z" fill="#5aa5e8" stroke="#1c78c8" stroke-width="1.100" stroke-linejoin="round"/>
<rect x="199.500" y="666.300" width="9" height="7.400" rx="0.600" fill="none" stroke="#3a3a3a" stroke-width="1.200"/><rect x="202.300" y="671.300" width="9.200" height="7.400" rx="0.600" fill="none" stroke="#3a3a3a" stroke-width="1.200"/>
<rect x="197.3" y="664.3" width="2.400" height="2.400" fill="#fafafa" stroke="#1c78c8" stroke-width="0.900"/>
<rect x="210.6" y="664.3" width="2.400" height="2.400" fill="#fafafa" stroke="#1c78c8" stroke-width="0.900"/>
<rect x="197.3" y="677.4" width="2.400" height="2.400" fill="#fafafa" stroke="#1c78c8" stroke-width="0.900"/>
<rect x="210.6" y="677.4" width="2.400" height="2.400" fill="#fafafa" stroke="#1c78c8" stroke-width="0.900"/>
<rect x="493" y="388" width="4" height="16" fill="#3a3a3a"/><rect x="494" y="389" width="2" height="4" fill="#fcfcfc"/><rect x="494" y="394" width="2" height="4" fill="#fcfcfc"/><rect x="494" y="399" width="2" height="4" fill="#fcfcfc"/><rect x="505" y="388" width="4" height="6" fill="#3a3a3a"/><rect x="506" y="389" width="2" height="4" fill="#fcfcfc"/><rect x="496" y="388" width="10" height="6" fill="#e0241a"/><rect x="497" y="389" width="8" height="4" fill="#ff9aa2"/><rect x="496" y="394" width="3" height="5" fill="#1f9a3c"/><rect x="497" y="394" width="2" height="4" fill="#a6e0ae"/><rect x="496" y="399" width="3" height="5" fill="#e0241a"/><rect x="497" y="399" width="2" height="4" fill="#ff9aa2"/><rect x="500" y="395" width="9" height="9" fill="#3a3a3a"/><rect x="501" y="396" width="7" height="7" fill="#fcfcfc"/><path d="M502.3 398.5h4.4M502.3 400.5h4.4M505.4 397.3l-1.800 4.400" stroke="#555" stroke-width="0.800" fill="none"/>
<rect x="493" y="412" width="16" height="16" fill="#3a3a3a"/><rect x="494" y="413" width="2" height="4" fill="#fcfcfc"/><rect x="506" y="413" width="2" height="4" fill="#fcfcfc"/><rect x="494" y="418" width="2" height="4" fill="#fcfcfc"/><rect x="506" y="418" width="2" height="4" fill="#fcfcfc"/><rect x="494" y="423" width="2" height="4" fill="#fcfcfc"/><rect x="506" y="423" width="2" height="4" fill="#fcfcfc"/><rect x="496" y="412" width="10" height="6" fill="#1469bd"/><rect x="497" y="413" width="8" height="4" fill="#8cc0ee"/><rect x="496" y="418" width="10" height="5" fill="#f08a30"/><rect x="497" y="418" width="8" height="4" fill="#f8dc90"/><rect x="496" y="423" width="10" height="5" fill="#e0241a"/><rect x="497" y="423" width="8" height="4" fill="#ff9aa2"/>
<rect x="493" y="436" width="16" height="16" fill="#3a3a3a"/><rect x="494" y="437" width="2" height="4" fill="#fcfcfc"/><rect x="506" y="437" width="2" height="4" fill="#fcfcfc"/><rect x="494" y="442" width="2" height="4" fill="#fcfcfc"/><rect x="506" y="442" width="2" height="4" fill="#fcfcfc"/><rect x="494" y="447" width="2" height="4" fill="#fcfcfc"/><rect x="506" y="447" width="2" height="4" fill="#fcfcfc"/><rect x="503" y="437" width="5" height="4" fill="#fcfcfc"/><rect x="505" y="437" width="1" height="4" fill="#8a8a8a"/><rect x="501" y="442" width="7" height="4" fill="#fcfcfc"/><rect x="505" y="442" width="1" height="4" fill="#8a8a8a"/><rect x="496" y="436" width="7" height="6" fill="#1469bd"/><rect x="497" y="437" width="5" height="4" fill="#8cc0ee"/><rect x="496" y="442" width="5" height="5" fill="#1469bd"/><rect x="497" y="442" width="3" height="4" fill="#8cc0ee"/><rect x="496" y="446" width="10" height="6" fill="#1469bd"/><rect x="497" y="447" width="8" height="4" fill="#8cc0ee"/>
<rect x="493" y="460" width="16" height="16" fill="#3a3a3a"/><rect x="494" y="461" width="14" height="14" fill="#7a7a7a"/><rect x="494" y="461" width="2" height="4" fill="#fcfcfc"/><rect x="506" y="461" width="2" height="4" fill="#fcfcfc"/><rect x="497" y="461" width="8" height="4" fill="#fcfcfc"/><rect x="494" y="466" width="2" height="4" fill="#fcfcfc"/><rect x="506" y="466" width="2" height="4" fill="#fcfcfc"/><rect x="497" y="466" width="8" height="4" fill="#fcfcfc"/><rect x="494" y="471" width="2" height="4" fill="#fcfcfc"/><rect x="506" y="471" width="2" height="4" fill="#fcfcfc"/><rect x="497" y="471" width="8" height="4" fill="#fcfcfc"/><rect x="498" y="462" width="2" height="2" fill="#e8404a"/><rect x="501" y="463" width="3" height="1" fill="#555"/><rect x="498" y="467" width="2" height="2" fill="#2aa850"/><rect x="501" y="468" width="3" height="1" fill="#555"/><rect x="498" y="472" width="2" height="2" fill="#e8404a"/><rect x="501" y="473" width="3" height="1" fill="#555"/>
<rect x="493" y="485" width="16" height="14" fill="#2e2e2e"/><rect x="494" y="487" width="14" height="11" fill="#fcfcfc"/><rect x="493" y="484" width="2" height="1" fill="#2e2e2e"/><rect x="497" y="484" width="8" height="1" fill="#2e2e2e"/><rect x="507" y="484" width="2" height="1" fill="#2e2e2e"/><rect x="495" y="489" width="3" height="3" fill="#1478c8"/><rect x="499" y="489" width="3" height="3" fill="#f58a1e"/><rect x="503" y="489" width="3" height="3" fill="#1478c8"/><rect x="495" y="494" width="3" height="3" fill="#f3f3f3"/><rect x="499" y="494" width="3" height="3" fill="#1478c8"/><rect x="503" y="494" width="3" height="3" fill="#f58a1e"/></svg>
</body></html>
